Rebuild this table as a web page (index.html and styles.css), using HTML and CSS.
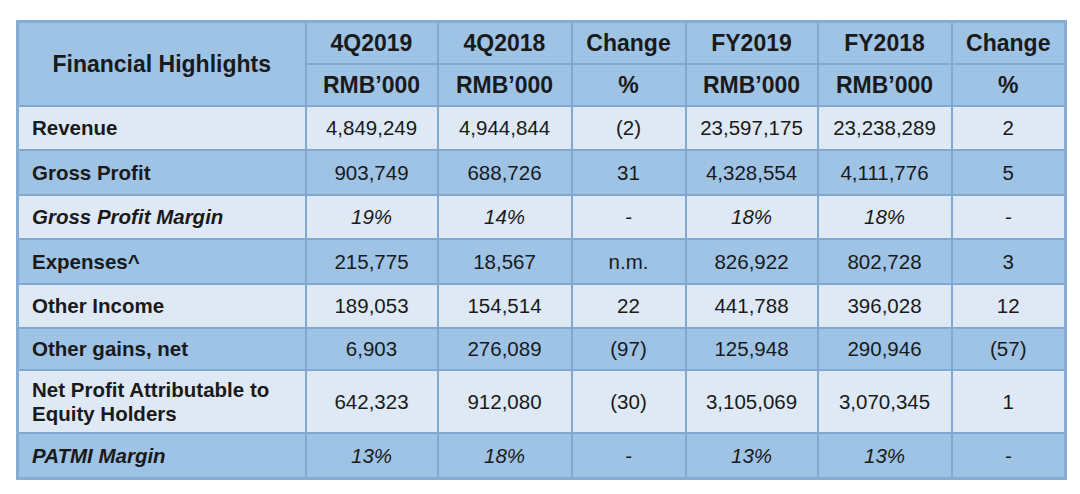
FILE: index.html
```html
<!DOCTYPE html>
<html>
<head>
<meta charset="utf-8">
<link rel="stylesheet" href="styles.css">
</head>
<body>
<table class="fin">
  <colgroup>
    <col class="c-label"><col class="c-amt"><col class="c-amt2"><col class="c-chg"><col class="c-amt"><col class="c-amt2"><col class="c-chg">
  </colgroup>
  <thead>
    <tr class="hrow">
      <th rowspan="2" class="title">Financial Highlights</th>
      <th>4Q2019</th><th>4Q2018</th><th>Change</th><th>FY2019</th><th>FY2018</th><th>Change</th>
    </tr>
    <tr class="hrow">
      <th>RMB’000</th><th>RMB’000</th><th>%</th><th>RMB’000</th><th>RMB’000</th><th>%</th>
    </tr>
  </thead>
  <tbody>
    <tr class="light"><td class="label">Revenue</td><td>4,849,249</td><td>4,944,844</td><td>(2)</td><td>23,597,175</td><td>23,238,289</td><td>2</td></tr>
    <tr class="dark tall"><td class="label">Gross Profit</td><td>903,749</td><td>688,726</td><td>31</td><td>4,328,554</td><td>4,111,776</td><td>5</td></tr>
    <tr class="light it"><td class="label">Gross Profit Margin</td><td>19%</td><td>14%</td><td>-</td><td>18%</td><td>18%</td><td>-</td></tr>
    <tr class="dark tall"><td class="label">Expenses^</td><td>215,775</td><td>18,567</td><td>n.m.</td><td>826,922</td><td>802,728</td><td>3</td></tr>
    <tr class="light"><td class="label">Other Income</td><td>189,053</td><td>154,514</td><td>22</td><td>441,788</td><td>396,028</td><td>12</td></tr>
    <tr class="dark short"><td class="label">Other gains, net</td><td>6,903</td><td>276,089</td><td>(97)</td><td>125,948</td><td>290,946</td><td>(57)</td></tr>
    <tr class="light double"><td class="label">Net Profit Attributable to<br>Equity Holders</td><td>642,323</td><td>912,080</td><td>(30)</td><td>3,105,069</td><td>3,070,345</td><td>1</td></tr>
    <tr class="dark it tall"><td class="label">PATMI Margin</td><td>13%</td><td>18%</td><td>-</td><td>13%</td><td>13%</td><td>-</td></tr>
  </tbody>
</table>
</body>
</html>
```

FILE: styles.css
```css
html, body {
  margin: 0;
  padding: 0;
  background: #ffffff;
}
body {
  padding: 20px 0 0 16px;
  font-family: "Liberation Sans", Arial, sans-serif;
  color: #1a1a1a;
}
.fin {
  border-collapse: collapse;
  table-layout: fixed;
  width: 1048px;
  border: 3px solid #86acd3;
}
.c-label { width: 288px; }
.c-amt { width: 132px; }
.c-amt2 { width: 134px; }
.c-chg { width: 114px; }

.fin th, .fin td {
  border: 2px solid #80a8d1;
  padding: 0;
  text-align: center;
  vertical-align: middle;
}
.fin th {
  background: #9ec3e5;
  font-weight: bold;
  font-size: 23px;
  height: 40px;
}
.fin th.title {
  font-size: 23px;
}
.fin td {
  font-size: 20.5px;
  height: 42px;
}
.fin td.label {
  text-align: left;
  padding-left: 13px;
  font-weight: bold;
  line-height: 24px;
}
.light td { background: #dee9f5; }
.dark td { background: #9fc3e5; }
.tall td { height: 43px; }
.short td { height: 40px; }
.double td { height: 61px; }
.it td { font-style: italic; }
```
